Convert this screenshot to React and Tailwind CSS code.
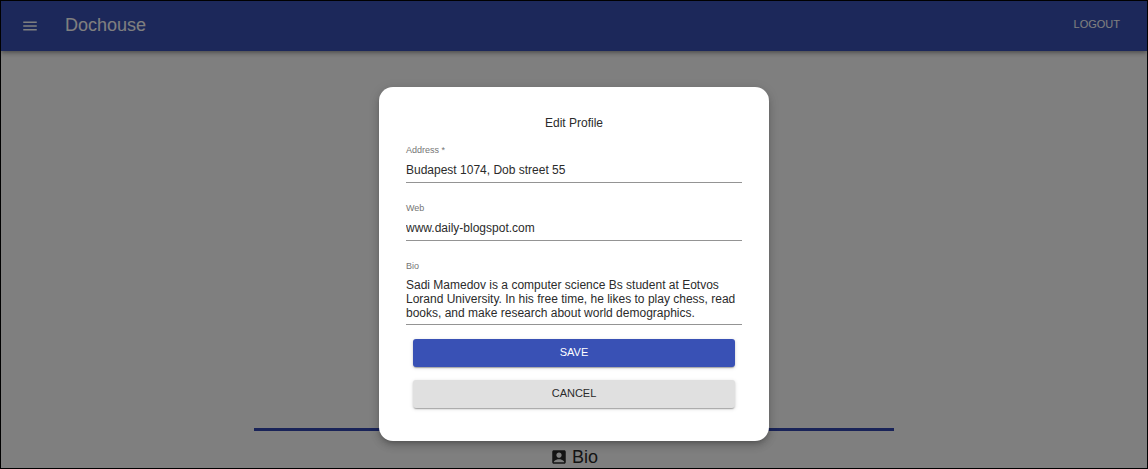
import { useId } from "react";
import { MdAccountBox, MdMenu } from "react-icons/md";

const BIO =
  "Sadi Mamedov is a computer science Bs student at Eotvos Lorand University. In his free time, he likes to play chess, read books, and make research about world demographics.";

function Field({ label, value, required, multiline }) {
  const id = useId();
  const control =
    "block w-full resize-none overflow-hidden border-b border-[#949494] bg-transparent pb-1 text-[12px] text-[#2b2b2b] outline-none";
  return (
    <div className="flex flex-col gap-1.5">
      <label htmlFor={id} className="text-[9px] leading-3 text-[#757575]">
        {label}
        {required && " *"}
      </label>
      {multiline ? (
        <textarea id={id} rows={3} defaultValue={value} className={`${control} leading-[14px]`} />
      ) : (
        <input id={id} type="text" required={required} defaultValue={value} className={`${control} leading-4`} />
      )}
    </div>
  );
}

const raised =
  "h-7 w-full rounded-[3px] pb-0.5 text-[11px] leading-5 uppercase shadow-[0_2px_1px_-1px_rgba(0,0,0,0.2),0_1px_2px_rgba(0,0,0,0.14),0_1px_4px_rgba(0,0,0,0.12)]";

export default function App() {
  return (
    <div className="relative flex h-screen flex-col overflow-hidden border border-black bg-white font-['Liberation_Sans',Arial,sans-serif] text-[#2b2b2b]">
      <header className="flex h-[50px] shrink-0 items-center bg-[#3951b5] px-5 text-white shadow-[0_2px_3px_-1px_rgba(0,0,0,0.2),0_3px_4px_rgba(0,0,0,0.14),0_1px_8px_rgba(0,0,0,0.12)]">
        <button type="button" aria-label="Menu" className="text-[18px]">
          <MdMenu />
        </button>
        <h1 className="ml-[26px] grow pb-0.5 text-[18px] leading-6">Dochouse</h1>
        <button type="button" className="px-[7px] pb-1 text-[11px] leading-5 uppercase">
          Logout
        </button>
      </header>

      <main className="mx-auto flex w-full max-w-[640px] grow flex-col justify-end">
        <section className="border-t-[3px] border-[#3347b0]">
          <h2 className="flex h-[37px] items-end justify-center gap-1 text-[18px] leading-[22px]">
            <MdAccountBox className="mb-0.5" />
            Bio
          </h2>
        </section>
      </main>

      <div className="absolute inset-0 flex items-start justify-center bg-black/50 pt-[86px]">
        <form
          role="dialog"
          aria-modal="true"
          aria-labelledby="edit-profile-title"
          onSubmit={(event) => event.preventDefault()}
          className="flex w-full max-w-[390px] flex-col rounded-[14px] bg-white px-[27px] pt-[26px] pb-[33px] shadow-[0_3px_4px_-2px_rgba(0,0,0,0.2),0_5px_8px_rgba(0,0,0,0.14),0_2px_12px_rgba(0,0,0,0.12)]"
        >
          <h2 id="edit-profile-title" className="text-center text-[12px] leading-5">
            Edit Profile
          </h2>
          <div className="mt-[11px] flex flex-col gap-[19px]">
            <Field label="Address" value="Budapest 1074, Dob street 55" required />
            <Field label="Web" value="www.daily-blogspot.com" />
            <Field label="Bio" value={BIO} multiline />
          </div>
          <div className="mt-[14px] flex flex-col gap-[13px] px-[7px]">
            <button type="submit" className={`${raised} bg-[#3951b5] text-white`}>
              Save
            </button>
            <button type="button" className={`${raised} bg-[#e0e0e0]`}>
              Cancel
            </button>
          </div>
        </form>
      </div>
    </div>
  );
}
